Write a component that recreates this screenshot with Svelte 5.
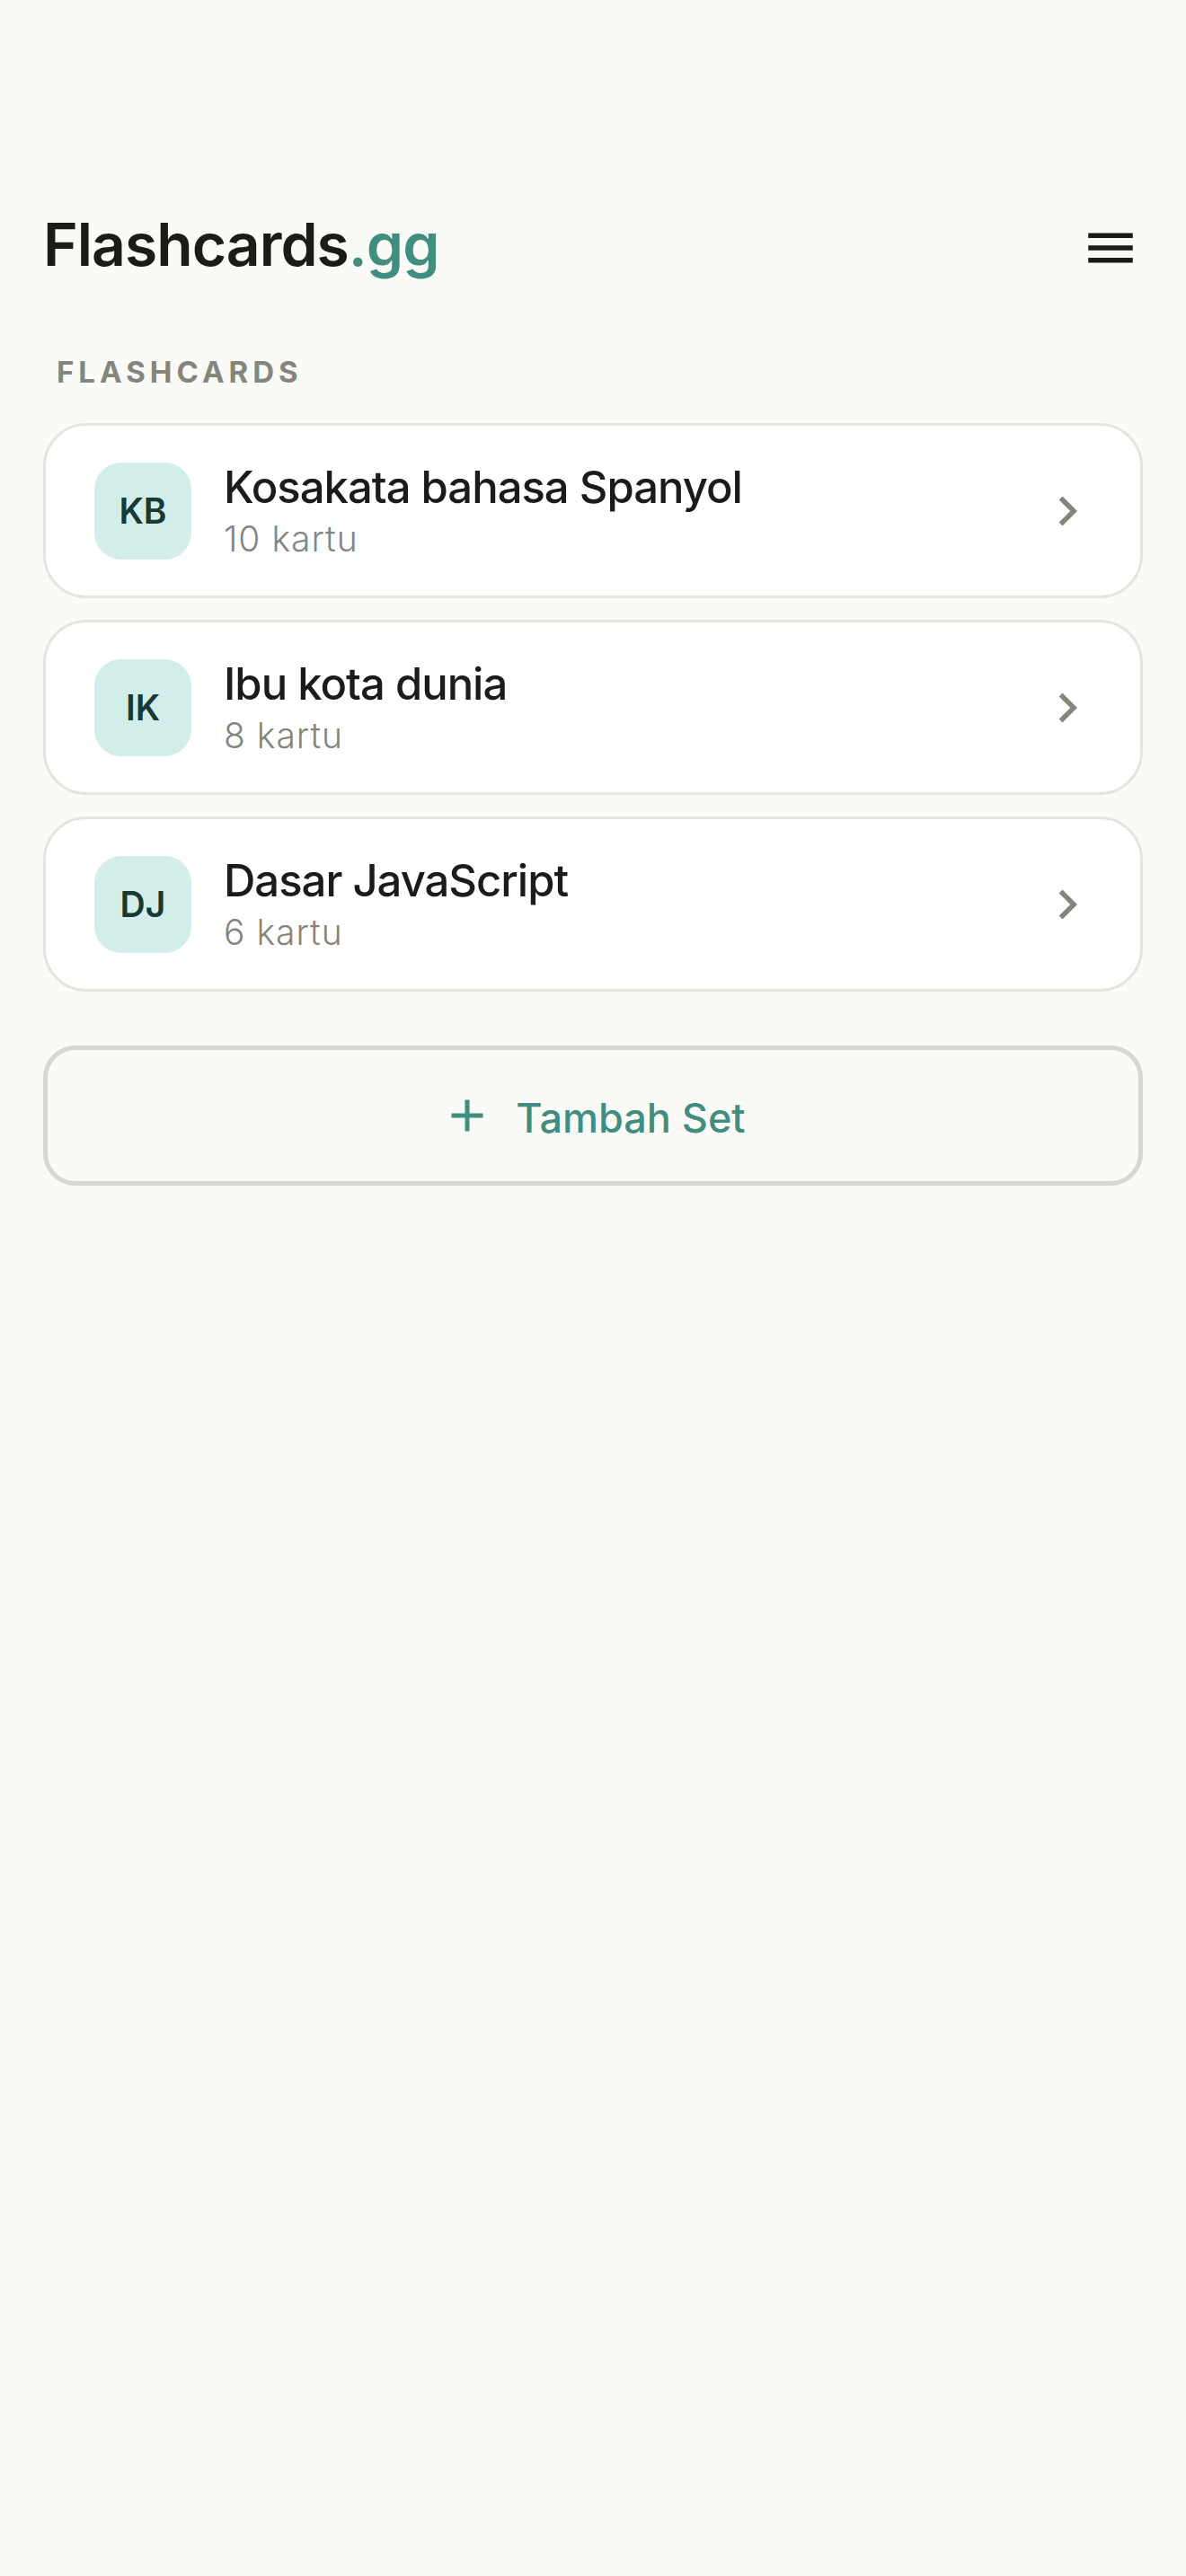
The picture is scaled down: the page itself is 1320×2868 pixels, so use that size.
<script>
  const sets = [
    { initials: 'KB', title: 'Kosakata bahasa Spanyol', count: 10 },
    { initials: 'IK', title: 'Ibu kota dunia', count: 8 },
    { initials: 'DJ', title: 'Dasar JavaScript', count: 6 }
  ];
</script>

<svelte:head>
  <title>Flashcards.gg</title>
</svelte:head>

<div class="page">
  <header>
    <h1>Flashcards<span class="tld">.gg</span></h1>
    <button class="menu" aria-label="Menu">
      <svg class="icon" viewBox="0 0 24 24" aria-hidden="true">
        <path d="M3 18h18v-2H3v2zm0-5h18v-2H3v2zm0-7v2h18V6H3z" />
      </svg>
    </button>
  </header>

  <main>
    <h2>FLASHCARDS</h2>

    <ul class="sets">
      {#each sets as set}
        <li>
          <button class="card">
            <span class="badge">{set.initials}</span>
            <span class="info">
              <span class="title">{set.title}</span>
              <span class="count">{set.count} kartu</span>
            </span>
            <svg class="icon chevron" viewBox="0 0 24 24" aria-hidden="true">
              <path d="M10 6L8.59 7.41 13.17 12l-4.58 4.59L10 18l6-6z" />
            </svg>
          </button>
        </li>
      {/each}
    </ul>

    <button class="add">
      <svg class="plus" viewBox="0 0 24 24" aria-hidden="true">
        <path d="M19 13h-6v6h-2v-6H5v-2h6V5h2v6h6v2z" />
      </svg>
      <span>Tambah Set</span>
    </button>
  </main>
</div>

<style>
  :global(body) {
    background: #fafbf6;
  }

  .page {
    padding: 222px 48px 48px;
    font-family: Inter, "Liberation Sans", sans-serif;
    color: #1b1b19;
  }

  button {
    margin: 0;
    padding: 0;
    border: none;
    background: none;
    font: inherit;
    color: inherit;
    cursor: pointer;
  }

  .icon {
    display: block;
    flex: none;
    width: 66px;
    height: 66px;
    fill: currentColor;
  }

  header {
    display: flex;
    align-items: center;
    justify-content: space-between;
    height: 108px;
  }

  h1 {
    margin: 0 0 9px;
    font-size: 66px;
    font-weight: 600;
    line-height: 84px;
    letter-spacing: -1px;
  }

  .tld {
    color: #418e80;
  }

  .menu {
    padding: 3px;
  }

  h2 {
    margin: 63px 15px 36px;
    font-size: 33px;
    font-weight: 700;
    line-height: 42px;
    letter-spacing: 5px;
    color: #84857d;
  }

  .sets {
    display: flex;
    flex-direction: column;
    gap: 24px;
    margin: 0;
    padding: 0;
    list-style: none;
  }

  .card {
    display: flex;
    align-items: center;
    gap: 36px;
    box-sizing: border-box;
    width: 100%;
    padding: 39px 48px 39px 54px;
    border: 3px solid #e4e5df;
    border-radius: 48px;
    background: #fff;
    text-align: left;
  }

  .badge {
    display: flex;
    align-items: center;
    justify-content: center;
    flex: none;
    width: 108px;
    height: 108px;
    border-radius: 30px;
    background: #d3edea;
    font-size: 39px;
    font-weight: 600;
    color: #183a34;
  }

  .info {
    display: flex;
    flex: 1;
    flex-direction: column;
    gap: 3px;
    min-width: 0;
  }

  .title {
    font-size: 49px;
    font-weight: 500;
    line-height: 60px;
    letter-spacing: -1px;
  }

  .count {
    font-size: 39px;
    font-weight: 300;
    line-height: 48px;
    letter-spacing: 1px;
    color: #84857d;
  }

  .chevron {
    color: #84857d;
  }

  .add {
    display: flex;
    align-items: flex-end;
    justify-content: center;
    gap: 24px;
    box-sizing: border-box;
    width: 100%;
    margin-top: 60px;
    padding: 43px 48px;
    border: 5px solid #d7d7d1;
    border-radius: 36px;
    font-size: 45px;
    font-weight: 500;
    line-height: 54px;
    color: #418e80;
  }

  .plus {
    width: 60px;
    height: 60px;
    fill: currentColor;
  }
</style>
